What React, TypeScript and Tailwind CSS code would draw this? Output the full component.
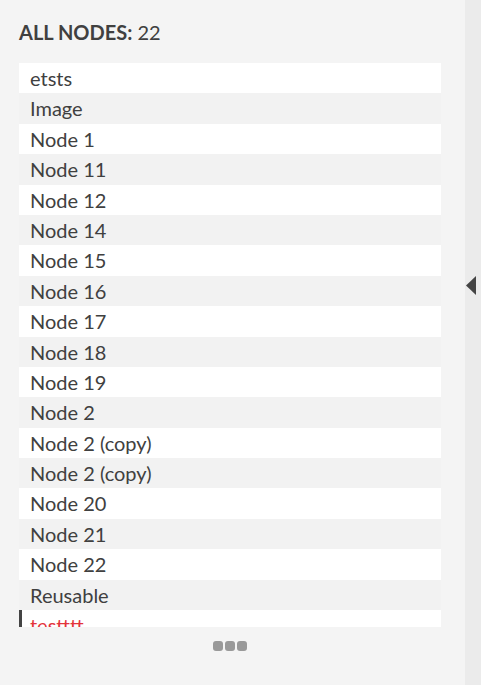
import * as React from "react"

const NODES = [
  "etsts",
  "Image",
  "Node 1",
  "Node 11",
  "Node 12",
  "Node 14",
  "Node 15",
  "Node 16",
  "Node 17",
  "Node 18",
  "Node 19",
  "Node 2",
  "Node 2 (copy)",
  "Node 2 (copy)",
  "Node 20",
  "Node 21",
  "Node 22",
  "Reusable",
]

export default function App() {
  return (
    <div
      className="flex h-[685px] w-[494px] bg-white text-[#404040]"
      style={{ fontFamily: "Lato, 'Open Sans', sans-serif" }}
    >
      <div className="flex w-[465px] flex-col bg-[#f4f4f4] px-[19px] pt-[22px]">
        <h2 className="mb-[21px] text-[20px] leading-[20px]">
          <span className="font-bold">ALL NODES:</span> 22
        </h2>

        <ul className="h-[564px] w-[422px] overflow-hidden">
          {NODES.map((name, i) => (
            <li
              key={i}
              className={
                "h-[30.4px] pl-[11px] text-[20px] leading-[30.4px] " +
                (i % 2 === 0 ? "bg-white" : "bg-[#f2f2f2]")
              }
            >
              {name}
            </li>
          ))}
          {/* active item, cut off by the scroll area */}
          <li className="h-[30.4px] border-l-[3px] border-[#444] bg-white pl-[8px] text-[20px] leading-[30.4px] text-[#e3343b]">
            testttt
          </li>
        </ul>

        <div className="mt-[14px] flex w-[422px] justify-center gap-[2px]">
          <span className="h-[10px] w-[10px] rounded-[3px] bg-[#999]" />
          <span className="h-[10px] w-[10px] rounded-[3px] bg-[#999]" />
          <span className="h-[10px] w-[10px] rounded-[3px] bg-[#999]" />
        </div>
      </div>

      {/* collapse handle */}
      <div className="w-[16px] bg-[#ebebeb] pt-[276px] pl-[1px]">
        <svg width="10" height="19" viewBox="0 0 10 19">
          <polygon points="10,0 10,19 0,9.5" fill="#444" />
        </svg>
      </div>
    </div>
  )
}
